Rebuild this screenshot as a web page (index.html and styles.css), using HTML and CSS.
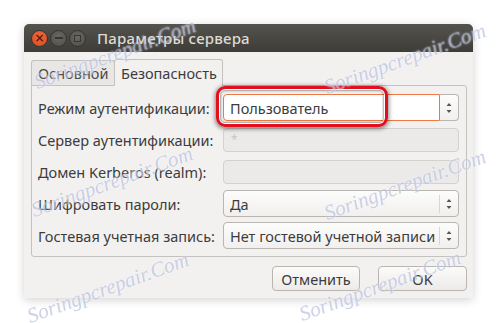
FILE: index.html
```html
<!doctype html>
<html lang="ru">
<head>
    <meta charset="utf-8">
    <title>Параметры сервера</title>
    <link rel="stylesheet" href="styles.css">
</head>
<body>
    <div class="window">
        <div class="titlebar">
            <div class="controls">
                <span class="ctl close">&#215;</span>
                <span class="ctl min"><i class="bar"></i></span>
                <span class="ctl max"><i class="box"></i></span>
            </div>
            <span class="title">Параметры сервера</span>
        </div>
        <div class="content">
            <div class="tabs">
                <span class="tab">Основной</span>
                <span class="tab active">Безопасность</span>
            </div>
            <div class="page">
                <div class="form">
                    <label>Режим аутентификации:</label>
                    <div class="combo entry-combo">
                        <span class="entry focus">Пользователь</span>
                        <span class="spin-btn">
                            <svg class="arrows" width="18" height="14" viewBox="0 0 18 14"><path d="M6.5 5 9 2 11.5 5Z M6.5 9 9 12 11.5 9Z" fill="#555"/></svg>
                        </span>
                    </div>

                    <label>Сервер аутентификации:</label>
                    <div class="entry disabled"><span class="star">*</span></div>

                    <label>Домен Kerberos (realm):</label>
                    <div class="entry disabled"></div>

                    <label>Шифровать пароли:</label>
                    <div class="combo">
                        <span class="value">Да</span>
                        <span class="sep"></span>
                        <svg class="arrows" width="18" height="14" viewBox="0 0 18 14"><path d="M6.5 5 9 2 11.5 5Z M6.5 9 9 12 11.5 9Z" fill="#555"/></svg>
                    </div>

                    <label>Гостевая учетная запись:</label>
                    <div class="combo">
                        <span class="value">Нет гостевой учетной записи</span>
                        <span class="sep"></span>
                        <svg class="arrows" width="18" height="14" viewBox="0 0 18 14"><path d="M6.5 5 9 2 11.5 5Z M6.5 9 9 12 11.5 9Z" fill="#555"/></svg>
                    </div>
                </div>
            </div>
            <div class="actions">
                <button class="btn">Отменить</button>
                <button class="btn">OK</button>
            </div>
        </div>
    </div>

    <!-- annotation + watermarks lie over the screenshot -->
    <div class="mark"></div>
    <span class="wm wm1">Soringpcrepair.Com</span>
    <span class="wm wm2">Soringpcrepair.Com</span>
    <span class="wm wm3">Soringpcrepair.Com</span>
    <span class="wm wm4">Soringpcrepair.Com</span>
    <span class="wm wm5">Soringpcrepair.Com</span>
    <span class="wm wm6">Soringpcrepair.Com</span>
</body>
</html>
```

FILE: styles.css
```css
* {
    box-sizing: border-box;
}
html {
    overflow: hidden;
}
body {
    margin: 0;
    padding: 24px 0 0 24px;
    background: #fff;
    font: 14.5px "Noto Sans", "DejaVu Sans", sans-serif;
    color: #3c3c3c;
    position: relative;
    height: 323px;
    overflow: hidden;
}
.window {
    width: 449px;
    height: 274px;
    background: #f2f1f0;
    border-radius: 5px 5px 0 0;
    box-shadow: 0 2px 10px rgba(0, 0, 0, 0.18);
    display: flex;
    flex-direction: column;
}
.titlebar {
    height: 28px;
    display: flex;
    align-items: center;
    padding-left: 7px;
    background: linear-gradient(#55534e, #3d3c38);
    border-radius: 5px 5px 0 0;
}
.controls {
    display: flex;
    gap: 2px;
}
.ctl {
    width: 17px;
    height: 17px;
    border-radius: 50%;
    display: flex;
    align-items: center;
    justify-content: center;
    background: radial-gradient(circle at 50% 40%, #6b6964, #4f4d48);
    border: 1px solid #35342f;
}
.close {
    background: radial-gradient(circle at 50% 40%, #f06a3e, #d9471c);
    color: #5a1d0c;
    font: bold 12px "DejaVu Sans", sans-serif;
    line-height: 1;
}
.bar {
    width: 8px;
    height: 2px;
    background: #38372f;
}
.box {
    width: 7px;
    height: 7px;
    border: 1.5px solid #38372f;
}
.title {
    margin-left: 11px;
    color: #dfdbd2;
    font-size: 15px;
    font-weight: 500;
    letter-spacing: 0.2px;
}
.content {
    flex: 1;
    padding: 6px 6px 7px 7px;
    display: flex;
    flex-direction: column;
}
.tabs {
    display: flex;
    align-items: flex-end;
    height: 27px;
}
.tab {
    height: 25px;
    padding: 0 6px;
    display: flex;
    align-items: center;
    border: 1px solid #c4c2be;
    border-bottom: none;
    border-radius: 3px 3px 0 0;
    background: #e8e7e5;
    color: #4a4a4a;
}
.tab.active {
    height: 27px;
    width: 109px;
    background: #f2f1f0;
    color: #3c3c3c;
    margin-left: -1px;
    margin-bottom: -1px;
    position: relative;
}
.tabs .tab:first-child {
    width: 84px;
}
.page {
    height: 172px;
    border: 1px solid #c4c2be;
    border-radius: 0 3px 3px 3px;
    padding: 8px 7px 0 6px;
}
.form {
    display: grid;
    grid-template-columns: 185px 1fr;
    grid-auto-rows: 27px;
    row-gap: 5px;
    align-items: center;
}
.form label {
    white-space: nowrap;
}
.entry {
    height: 24px;
    border: 1px solid #bcbab5;
    border-radius: 4px;
    background: #fff;
    display: flex;
    align-items: center;
    padding-left: 7px;
}
.entry.disabled {
    background: #ebeae8;
    border-color: #d3d1cd;
}
.star {
    color: #c9c7c3;
    font-size: 12px;
}
.combo {
    height: 27px;
    border: 1px solid #b9b6b1;
    border-radius: 4px;
    background: linear-gradient(#fcfcfb, #f1f0ef);
    display: flex;
    align-items: center;
    padding-left: 6px;
}
.combo .value {
    flex: 1;
    white-space: nowrap;
    overflow: hidden;
}
.sep {
    width: 1px;
    height: 18px;
    background: #d8d6d2;
}
.arrows {
    display: block;
    flex: none;
}
.entry-combo {
    border: none;
    background: none;
    padding: 0;
}
.entry-combo .entry {
    flex: 1;
    height: 27px;
    border-color: #f07746;
    border-radius: 4px 0 0 4px;
    padding-left: 6px;
}
.spin-btn {
    height: 27px;
    width: 19px;
    border: 1px solid #b9b6b1;
    border-left: none;
    border-radius: 0 4px 4px 0;
    background: linear-gradient(#fcfcfb, #f1f0ef);
    display: flex;
    align-items: center;
}
.actions {
    margin-top: 9px;
    display: flex;
    justify-content: flex-end;
    gap: 18px;
}
.btn {
    width: 88px;
    height: 25px;
    font: inherit;
    color: #3c3c3c;
    border: 1px solid #b9b6b1;
    border-radius: 4px;
    background: linear-gradient(#fbfbfa, #ecebe9);
    padding: 0;
}
.actions .btn:last-child {
    width: 89px;
}
.mark {
    position: absolute;
    left: 216px;
    top: 86px;
    width: 172px;
    height: 41px;
    border: 3px solid #e1101c;
    border-radius: 9px;
    box-shadow: 0 1px 4px 1px rgba(0, 0, 0, 0.45), inset 0 0 0 1px #fff, inset 0 0 2px 2px rgba(0, 0, 0, 0.35);
}
.wm {
    position: absolute;
    font: italic 21px "Liberation Serif", serif;
    color: rgba(160, 170, 212, 0.55);
    text-shadow: 0 0 2px rgba(255, 255, 255, 0.8);
    white-space: nowrap;
    transform: translate(-50%, -50%) rotate(-20deg);
}
.wm1 { left: 115px; top: 54px; }
.wm2 { left: 405px; top: 59px; }
.wm3 { left: 112px; top: 182px; }
.wm4 { left: 405px; top: 185px; }
.wm5 { left: 108px; top: 288px; }
.wm6 { left: 380px; top: 286px; }
```
